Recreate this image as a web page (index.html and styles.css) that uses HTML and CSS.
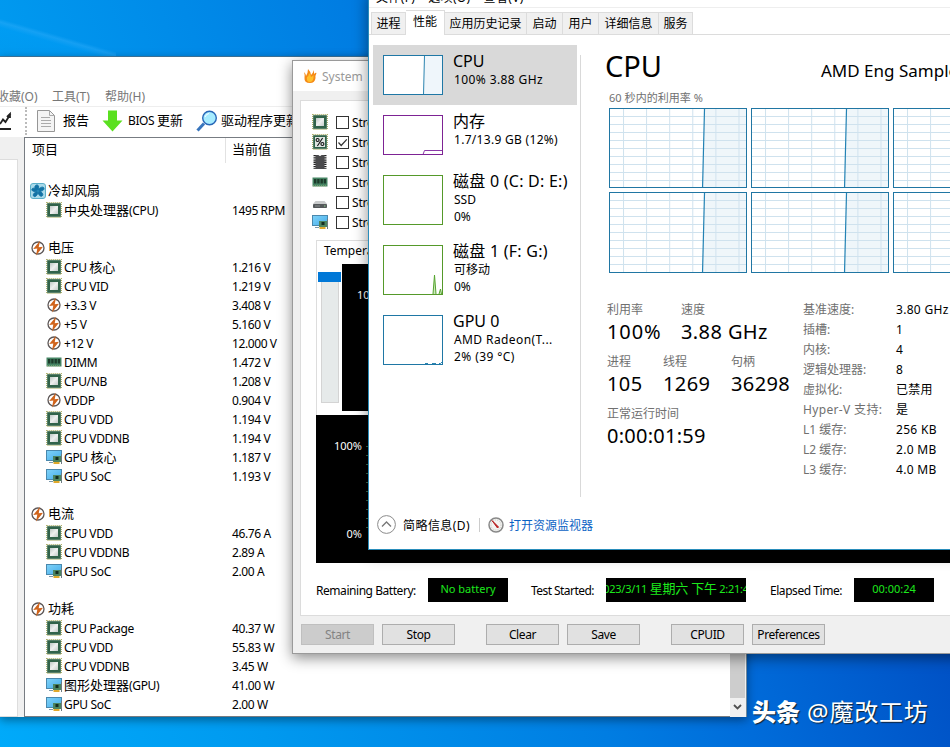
FILE: index.html
```html
<!DOCTYPE html>
<html lang="zh-CN">
<head>
  <meta charset="UTF-8" />
  <title>System Stability Test</title>
  <link rel="stylesheet" href="styles.css">
</head>
<body>
  <!-- 图标 -->
  <svg class="defs" width="0" height="0">
    <defs>
      <linearGradient id="screen" x1="0" y1="0" x2="1" y2="1"><stop offset="0" stop-color="#7fd2f8" /><stop offset="1" stop-color="#46adea" /></linearGradient>
      <linearGradient id="die" x1="0" y1="0" x2="1" y2="1"><stop offset="0" stop-color="#bfc8c5" /><stop offset=".5" stop-color="#eef0ef" /><stop offset="1" stop-color="#c5cbc9" /></linearGradient>
      <pattern id="grid" x="13" y="7" width="23.1" height="8" patternUnits="userSpaceOnUse">
        <path d="M.5 0V8M0 .5H23.1" stroke="#cfe2ee" fill="none" />
      </pattern>
    </defs>
    <symbol id="cpu" viewBox="0 0 16 16">
      <rect x=".7" y=".7" width="14.6" height="14.6" fill="none" stroke="#a5a85c" stroke-width="1.2" stroke-dasharray="1 1" />
      <rect x="1.2" y="1.2" width="13.6" height="13.6" fill="#31634a" />
      <rect x="4" y="4" width="8" height="8" fill="url(#die)" />
    </symbol>
    <symbol id="fpu" viewBox="0 0 16 16">
      <rect x=".7" y=".7" width="14.6" height="14.6" fill="none" stroke="#a5a85c" stroke-width="1.2" stroke-dasharray="1 1" />
      <rect x="1.2" y="1.2" width="13.6" height="13.6" fill="#31634a" />
      <rect x="3" y="3" width="10" height="10" fill="#dfe5e2" />
      <path d="M10.6 4L5.4 12" stroke="#111" stroke-width="1.1" />
      <circle cx="5.6" cy="6" r="1.5" fill="none" stroke="#111" stroke-width="1.1" />
      <circle cx="10.4" cy="10" r="1.5" fill="none" stroke="#111" stroke-width="1.1" />
    </symbol>
    <symbol id="cache" viewBox="0 0 16 16">
      <path d="M3 1V15M13 1V15" stroke="#222" stroke-width="3" stroke-dasharray="1.3 .9" />
      <path d="M3.5 1H6.5Q8 3 9.5 1H12.5V15H3.5Z" fill="#4b4b4d" />
    </symbol>
    <symbol id="ram" viewBox="0 0 16 16">
      <path d="M.5 3.5H15.5V12.5H.5Z" fill="#468564" />
      <path d="M2 5H4.4V9.500H2ZM5.200 5H7.600V9.500H5.200ZM8.500 5H10.900V9.500H8.500ZM11.700 5H14.100V9.500H11.700Z" fill="#1d3b2b" />
      <path d="M1 12H15" stroke="#a9bd87" stroke-dasharray="1 1" />
    </symbol>
    <symbol id="disk" viewBox="0 0 16 16">
      <path d="M3.500 7H12.500L15 10H1Z" fill="#c9cbcc" />
      <rect x="1" y="10" width="14" height="4" rx=".8" fill="#55595b" />
      <path d="M3 12H8" stroke="#8a8e90" /><rect x="12" y="11.500" width="1.500" height="1" fill="#8fd08f" />
    </symbol>
    <symbol id="gpu" viewBox="0 0 16 16">
      <rect x=".5" y="1.500" width="15" height="10" fill="url(#screen)" stroke="#4a88ad" />
      <path d="M3 13.500H7" stroke="#7c9aac" />
      <rect x="7" y="7" width="8" height="6" fill="#4c8460" />
      <rect x="9.500" y="8" width="3" height="3" fill="#142d20" />
      <path d="M7.500 14H13.500" stroke="#e0a92c" stroke-width="2" /><path d="M15.500 5V15" stroke="#6c7c80" />
    </symbol>
    <symbol id="bolt" viewBox="0 0 16 16">
      <circle cx="8" cy="8" r="6" fill="#fff" stroke="#5c5656" stroke-width="1.300" />
      <path d="M10 .8L3.200 9L7.300 8.600L6 15.500L13 6.800L8.700 7.300Z" fill="#d0641c" />
    </symbol>
    <symbol id="fan" viewBox="0 0 16 16">
      <rect x=".5" y=".5" width="15" height="15" rx="2.500" fill="#a9daea" stroke="#5bafc9" />
      <path d="M8 8C4 7 4 2 7 2C9 2 9 5 8 8C9 4 14 3 14 5.500C14 8 10 8.500 8 8C12 8 14 12 12 13C10 14 8 11 8 8C8 12 5 15 3.500 13C2.500 11 5 9 8 8C4 9 1 8 2 6C3 4 6 6 8 8Z" fill="#1272a5" stroke="#1272a5" />
      <circle cx="8" cy="8" r="1.500" fill="#2287b6" />
    </symbol>
    <symbol id="core">
      <rect width="138" height="81" fill="#fff" />
      <path d="M92.500 81L94.500 0H138V81Z" fill="#eff6fa" />
      <rect width="138" height="81" fill="url(#grid)" />
      <path d="M92.500 81L94.500 0" stroke="#2382b4" stroke-width="1.200" />
    </symbol>
  </svg>

  <!-- AIDA64 主窗口 -->
  <div class="window aida">
    <div class="aida-menu"><span>收藏(O)</span><span>工具(T)</span><span>帮助(H)</span></div>
    <div class="aida-toolbar">
      <svg class="chart-icon" width="12" height="22" viewBox="0 0 12 22"><path d="M0 14L3 9.500L5.500 12L10.500 4M7 7L10 4V8M0 19H11" fill="none" stroke="#222" stroke-width="1.800" /></svg>
      <span class="tool-sep"></span>
      <svg class="report-icon" width="18" height="22" viewBox="0 0 18 22"><path d="M.5 .5H12.500L17.500 5.500V21.500H.5Z" fill="#f4f4f4" stroke="#969696" /><path d="M12.500 .5V5.500H17.500M4 7.500H13M4 10.500H14M4 13.500H14M4 16.500H14" fill="none" stroke="#aaa" /></svg>
      <span class="tool-report">报告</span>
      <svg class="arrow-icon" width="21" height="22" viewBox="0 0 21 22"><path d="M6 .5H15V10.500H20.500L10.500 21.500L.5 10.500H6Z" fill="#5ae020" /></svg>
      <span class="tool-bios">BIOS <b>更新</b></span>
      <svg class="search-icon" width="22" height="22" viewBox="0 0 22 22"><path d="M1.500 20.500L8 13.500" stroke="#3875bd" stroke-width="3" /><circle cx="13.500" cy="8" r="6.800" fill="#a6ecff" stroke="#2867b8" stroke-width="1.400" /><path d="M9 7Q10 4 13 3.500" stroke="#fff" fill="none" /></svg>
      <span class="tool-driver">驱动程序更新</span>
    </div>
    <div class="aida-body">
      <div class="tree"></div>
      <div class="sensors">
        <div class="sensor-head"><span>项目</span><span>当前值</span></div>
        <ul class="sensor-list">
          <li class="group"><svg><use href="#fan" /></svg><b>冷却风扇</b></li>
          <li><svg><use href="#cpu" /></svg><span><b>中央处理器</b>(CPU)</span><em>1495 RPM</em></li>
          <li></li>
          <li class="group"><svg><use href="#bolt" /></svg><b>电压</b></li>
          <li><svg><use href="#cpu" /></svg><span>CPU <b>核心</b></span><em>1.216 V</em></li>
          <li><svg><use href="#cpu" /></svg><span>CPU VID</span><em>1.219 V</em></li>
          <li><svg><use href="#bolt" /></svg><span>+3.3 V</span><em>3.408 V</em></li>
          <li><svg><use href="#bolt" /></svg><span>+5 V</span><em>5.160 V</em></li>
          <li><svg><use href="#bolt" /></svg><span>+12 V</span><em>12.000 V</em></li>
          <li><svg><use href="#ram" /></svg><span>DIMM</span><em>1.472 V</em></li>
          <li><svg><use href="#cpu" /></svg><span>CPU/NB</span><em>1.208 V</em></li>
          <li><svg><use href="#bolt" /></svg><span>VDDP</span><em>0.904 V</em></li>
          <li><svg><use href="#cpu" /></svg><span>CPU VDD</span><em>1.194 V</em></li>
          <li><svg><use href="#cpu" /></svg><span>CPU VDDNB</span><em>1.194 V</em></li>
          <li><svg><use href="#gpu" /></svg><span>GPU <b>核心</b></span><em>1.187 V</em></li>
          <li><svg><use href="#gpu" /></svg><span>GPU SoC</span><em>1.193 V</em></li>
          <li></li>
          <li class="group"><svg><use href="#bolt" /></svg><b>电流</b></li>
          <li><svg><use href="#cpu" /></svg><span>CPU VDD</span><em>46.76 A</em></li>
          <li><svg><use href="#cpu" /></svg><span>CPU VDDNB</span><em>2.89 A</em></li>
          <li><svg><use href="#gpu" /></svg><span>GPU SoC</span><em>2.00 A</em></li>
          <li></li>
          <li class="group"><svg><use href="#bolt" /></svg><b>功耗</b></li>
          <li><svg><use href="#cpu" /></svg><span>CPU Package</span><em>40.37 W</em></li>
          <li><svg><use href="#cpu" /></svg><span>CPU VDD</span><em>55.83 W</em></li>
          <li><svg><use href="#cpu" /></svg><span>CPU VDDNB</span><em>3.45 W</em></li>
          <li><svg><use href="#gpu" /></svg><span><b>图形处理器</b>(GPU)</span><em>41.00 W</em></li>
          <li><svg><use href="#gpu" /></svg><span>GPU SoC</span><em>2.00 W</em></li>
        </ul>
      </div>
      <div class="scrollbar">
        <svg width="15" height="18" viewBox="0 0 15 18"><path d="M4 7L7.500 10.500L11 7" fill="none" stroke="#505050" stroke-width="1.800" /></svg>
      </div>
    </div>
  </div>

  <!-- 稳定性测试 -->
  <div class="window stability">
    <div class="stab-title">
      <svg width="14" height="16" viewBox="0 0 14 16"><path d="M1 4Q3 6 3 8Q5 5 5 1Q8 4 8 7Q10 5 11 2L11 6Q13 4 13.500 5Q12 8 12.500 10Q12 15 7 15Q1 15 1.500 10Q2 7 1 4Z" fill="#f58a16" /><path d="M4 9Q6 8 6 5Q8 7 8 9Q10 8 10.500 7Q11 14 7 14Q3 14 4 9Z" fill="#ffc02c" /></svg>
      <span>System</span>
    </div>
    <div class="stab-panel">
      <div class="stress-list">
        <label><svg><use href="#cpu" /></svg><i class="check"></i>Stress CPU</label>
        <label><svg><use href="#fpu" /></svg><i class="check"><svg viewBox="0 0 11 11"><path d="M1.500 5.500L4.200 8.500L9.800 2.300" fill="none" stroke="#333" stroke-width="1.200" /></svg></i>Stress FPU</label>
        <label><svg><use href="#cache" /></svg><i class="check"></i>Stress cache</label>
        <label><svg><use href="#ram" /></svg><i class="check"></i>Stress RAM</label>
        <label><svg><use href="#disk" /></svg><i class="check"></i>Stress disks</label>
        <label><svg><use href="#gpu" /></svg><i class="check"></i>Stress GPU</label>
      </div>
      <div class="temp-box">
        <div class="temp-tab">Temperatures</div>
        <div class="temp-main">
          <div class="slider"><div class="thumb"></div><div class="track"></div></div>
          <div class="temp-graph">100°C</div>
        </div>
      </div>
      <div class="usage-graph">
        <span>100%</span><span>0%</span>
        <div class="ticks"></div>
      </div>
      <div class="status">
        <span class="st-battery">Remaining Battery:</span><span class="lcd lcd-battery">No battery</span>
        <span class="st-started">Test Started:</span><span class="lcd lcd-started"><span>2023/3/11 <b>星期六 下午</b> 2:21:48</span></span>
        <span class="st-elapsed">Elapsed Time:</span><span class="lcd lcd-elapsed">00:00:24</span>
      </div>
    </div>
    <div class="stab-buttons">
      <button disabled>Start</button><button>Stop</button>
      <button class="apart">Clear</button><button>Save</button>
      <button class="apart">CPUID</button><button>Preferences</button>
    </div>
  </div>

  <!-- 任务管理器 -->
  <div class="window taskmgr">
    <div class="tm-menu"><span>文件(F)</span><span>选项(O)</span><span>查看(V)</span></div>
    <div class="tabs">
      <span class="tab t1">进程</span><span class="tab t2 active">性能</span><span class="tab t3">应用历史记录</span><span class="tab t4">启动</span><span class="tab t5">用户</span><span class="tab t6">详细信息</span><span class="tab t7">服务</span>
    </div>
    <div class="tm-main">
      <div class="tm-side">
        <div class="item selected">
          <svg class="mini" width="60" height="40"><path d="M40.500 40L41.500 0H60V40Z" fill="#eff6fb" /><path d="M40.500 40L41.500 0" stroke="#2b84b0" /><rect x=".5" y=".5" width="59" height="39" fill="none" stroke="#1f77a5" /></svg>
          <div class="info"><h3>CPU</h3><p class="s-cpu">100% 3.88 GHz</p></div>
        </div>
        <div class="item">
          <svg class="mini" width="60" height="40"><path d="M40 39.500L41.500 35.500H60" fill="none" stroke="#8b3aa8" /><rect x=".5" y=".5" width="59" height="39" fill="none" stroke="#7d2394" /></svg>
          <div class="info"><h3>内存</h3><p class="s-mem">1.7/13.9 GB (12%)</p></div>
        </div>
        <div class="item tall">
          <svg class="mini" width="60" height="50"><rect x=".5" y=".5" width="59" height="49" fill="none" stroke="#55992a" /></svg>
          <div class="info"><h3 class="s-disk">磁盘 0 (C: D: E:)</h3><p>SSD</p><p>0%</p></div>
        </div>
        <div class="item tall">
          <svg class="mini" width="60" height="50"><path d="M50 49L51.500 30L53 49M56 49L57.500 44L58.500 49" fill="#cde7bd" stroke="#55a52e" /><rect x=".5" y=".5" width="59" height="49" fill="none" stroke="#55992a" /></svg>
          <div class="info"><h3 class="s-disk">磁盘 1 (F: G:)</h3><p>可移动</p><p>0%</p></div>
        </div>
        <div class="item tall">
          <svg class="mini" width="60" height="50"><path d="M42 48.500H45M49 48.500H53M56 48.500H57.500L59 47" fill="none" stroke="#2b84b0" /><rect x=".5" y=".5" width="59" height="49" fill="none" stroke="#1f77a5" /></svg>
          <div class="info"><h3>GPU 0</h3><p class="s-gpu">AMD Radeon(T...</p><p class="s-tmp">2% (39 °C)</p></div>
        </div>
      </div>
      <div class="tm-detail">
        <div class="detail-head"><h1>CPU</h1><span>AMD Eng Sample</span></div>
        <div class="chart-label">60 秒内的利用率 %</div>
        <div class="charts">
          <svg class="core"><use href="#core" /></svg>
          <svg class="core"><use href="#core" /></svg>
          <svg class="core"><use href="#core" /></svg>
          <svg class="core"><use href="#core" /></svg>
          <svg class="core"><use href="#core" /></svg>
          <svg class="core"><use href="#core" /></svg>
        </div>
        <div class="stats">
          <div class="stats-left">
            <div class="stat-row">
              <div class="stat w74"><label>利用率</label><strong>100%</strong></div>
              <div class="stat"><label>速度</label><strong>3.88 GHz</strong></div>
            </div>
            <div class="stat-row">
              <div class="stat w56"><label>进程</label><strong>105</strong></div>
              <div class="stat w68"><label>线程</label><strong>1269</strong></div>
              <div class="stat"><label>句柄</label><strong>36298</strong></div>
            </div>
            <div class="stat-row">
              <div class="stat"><label>正常运行时间</label><strong class="uptime">0:00:01:59</strong></div>
            </div>
          </div>
          <dl class="stats-right">
            <dt>基准速度:</dt><dd>3.80 GHz</dd>
            <dt>插槽:</dt><dd>1</dd>
            <dt>内核:</dt><dd>4</dd>
            <dt>逻辑处理器:</dt><dd>8</dd>
            <dt>虚拟化:</dt><dd>已禁用</dd>
            <dt class="hyper">Hyper-V 支持:</dt><dd>是</dd>
            <dt>L1 缓存:</dt><dd>256 KB</dd>
            <dt>L2 缓存:</dt><dd>2.0 MB</dd>
            <dt>L3 缓存:</dt><dd>4.0 MB</dd>
          </dl>
        </div>
      </div>
    </div>
    <div class="tm-footer">
      <svg width="19" height="19" viewBox="0 0 19 19"><circle cx="9.500" cy="9.500" r="8.900" fill="#fff" stroke="#8b8b8b" /><path d="M5 11.500L9.500 7L14 11.500" fill="none" stroke="#777" stroke-width="1.300" /></svg>
      <span class="brief">简略信息(D)</span>
      <span class="foot-sep"></span>
      <svg width="16" height="16" viewBox="0 0 16 16"><circle cx="8" cy="8" r="7" fill="#f4f4f2" stroke="#888" stroke-width="1.500" /><circle cx="8" cy="8" r="5" fill="none" stroke="#c7c7c2" stroke-dasharray="1 1" /><path d="M4 3.500L10.500 10L9.500 11Z" fill="#cb2222" stroke="#b51f1f" /></svg>
      <a>打开资源监视器</a>
    </div>
  </div>

  <div class="watermark"><strong>头条</strong> @魔改工坊</div>
</body>
</html>
```
FILE: styles.css
```css
* {
  box-sizing: border-box;
}

html {
  overflow: hidden;
}

body {
  margin: 0;
  width: 950px;
  height: 747px;
  overflow: hidden;
  position: relative;
  font-family: "Noto Sans", "Noto Sans CJK SC", sans-serif;
  font-size: 12px;
  color: #000;
  background:
    linear-gradient(196deg, transparent 58%, rgba(60, 180, 255, 0.35) 62%, rgba(0, 165, 255, 0.25) 68%, transparent 100%) 0 0 / 116px 56px no-repeat,
    linear-gradient(70deg, #00aafa 0%, #0099ef 22%, #007de2 50%, #006cda 62%, #0052c6 80%, #004abc 100%);
}

h1, h3, p, ul, dl, dd {
  margin: 0;
  padding: 0;
  font-weight: normal;
}

b, em, i {
  font-weight: normal;
  font-style: normal;
}

.defs {
  position: absolute;
}

.window {
  position: absolute;
  white-space: nowrap;
}

/* AIDA64 */
.aida {
  left: 0;
  top: 56px;
  width: 747px;
  height: 661px;
  background: #fff;
  border-top: 1px solid #3c6f92;
  border-right: 1px solid #70889a;
  box-shadow: 0 3px 9px rgba(0, 0, 0, 0.4);
}

.aida-menu {
  height: 49px;
  padding-top: 31px;
  display: flex;
  line-height: 18px;
  color: #777;
}

.aida-menu span:first-child {
  width: 55px;
  margin-left: -3px;
}

.aida-menu span:nth-child(2) {
  width: 53px;
}

.aida-toolbar {
  height: 31px;
  padding-bottom: 2px;
  display: flex;
  align-items: center;
  border-top: 1px solid #eee;
  font-size: 13px;
  line-height: 18px;
}

.aida-toolbar span {
  margin-top: -2px;
}

.aida-toolbar .tool-sep {
  width: 1px;
  height: 28px;
  margin: 0 10px 0 13px;
  border-left: 2px dotted #bbb;
}

.aida-toolbar .tool-report {
  width: 31px;
  margin: -2px 8px 0 8px;
}

.aida-toolbar .tool-bios {
  width: 60px;
  margin: -2px 8px 0 5px;
  font-size: 12px;
  letter-spacing: -0.4px;
}

.tool-bios b {
  font-size: 13px;
  letter-spacing: 0;
}

.tool-driver {
  margin-left: 3px;
}

.aida-body {
  height: 580px;
  display: flex;
  background: #f0f0f0;
}

.tree {
  width: 18px;
  height: 558px;
  margin: 22px 6px 0 0;
  background: #fff;
  border: 1px solid #ddd;
  border-left: none;
}

.sensors {
  width: 706px;
  background: #fff;
  border: 1px solid #777c82;
  border-right: none;
}

.sensor-head {
  height: 43px;
  display: flex;
  font-size: 13px;
  line-height: 23px;
}

.sensor-head span:first-child {
  width: 201px;
  height: 25px;
  padding-left: 7px;
  border-right: 1px solid #e2e2e2;
}

.sensor-head span:last-child {
  padding-left: 6px;
}

.sensor-list {
  list-style: none;
}

.sensor-list li {
  height: 19px;
  padding-left: 21px;
  display: flex;
  align-items: center;
  line-height: 21px;
  letter-spacing: -0.35px;
}

.sensor-list li.group {
  padding-left: 5px;
}

.sensor-list svg {
  width: 16px;
  height: 16px;
  margin-right: 2px;
  flex: none;
}

.sensor-list b {
  font-size: 13px;
  letter-spacing: 0;
}

.sensor-list span,
.sensor-list em {
  padding-top: 2px;
}

.sensor-list span {
  width: 168px;
}

.sensor-list em {
  letter-spacing: -0.4px;
}

.scrollbar {
  width: 15px;
  height: 579px;
  background: #cdcdcd;
  display: flex;
  align-items: flex-end;
}

.scrollbar svg {
  background: #f0f0f0;
}

/* 稳定性测试 */
.stability {
  left: 292px;
  top: 60px;
  width: 680px;
  height: 594px;
  background: #f0f0f0;
  border: 1px solid #9a9a9a;
  box-shadow: 0 4px 13px rgba(0, 0, 0, 0.45);
}

.stab-title {
  height: 30px;
  padding-left: 10px;
  display: flex;
  align-items: center;
  gap: 5px;
  background: #fff;
  color: #999;
}

.stab-panel {
  height: 516px;
  margin: 9px 0 0 7px;
  padding: 11px 0 0 15px;
  background: #fff;
  border: 1px solid #dcdcdc;
}

.stress-list {
  width: 300px;
  height: 128px;
  margin-left: -4px;
}

.stress-list label {
  height: 20px;
  display: flex;
  align-items: center;
  letter-spacing: -0.2px;
}

.stress-list label > svg {
  width: 16px;
  height: 16px;
}

.check {
  width: 13px;
  height: 13px;
  margin: 1px 3px 0 8px;
  border: 1px solid #333;
  display: flex;
}

.temp-box {
  height: 175px;
  border: 1px solid #ddd;
  border-bottom: none;
}

.temp-tab {
  height: 23px;
  padding-left: 7px;
  line-height: 20px;
}

.temp-main {
  display: flex;
}

.slider {
  width: 25px;
  padding: 8px 2px 0 1px;
}

.thumb {
  width: 23px;
  height: 10px;
  background: #0078d7;
}

.track {
  width: 18px;
  height: 121px;
  margin-left: 3px;
  background: #e6eaea;
  border: 1px solid #d4d4d4;
  border-top: none;
}

.temp-graph {
  width: 620px;
  height: 147px;
  padding: 23px 0 0 15px;
  background: #000;
  color: #fff;
  font-size: 11px;
}

.usage-graph {
  height: 148px;
  width: 645px;
  padding: 23px 0 21px;
  position: relative;
  display: flex;
  flex-direction: column;
  justify-content: space-between;
  background: #000;
  color: #fff;
  font-size: 11px;
  line-height: 16px;
}

.usage-graph span {
  width: 46px;
  text-align: right;
}

.ticks {
  position: absolute;
  left: 50px;
  top: 31px;
  width: 2px;
  height: 90px;
  background: repeating-linear-gradient(#3c6a4c 0, #3c6a4c 1px, transparent 1px, transparent 9px);
}

.status {
  height: 52px;
  padding-top: 2px;
  display: flex;
  align-items: center;
}

.st-battery {
  width: 112px;
  letter-spacing: -0.45px;
}

.st-started {
  width: 75px;
  margin-left: 23px;
  letter-spacing: -0.55px;
}

.st-elapsed {
  width: 84px;
  margin-left: 24px;
  letter-spacing: -0.45px;
}

.lcd {
  height: 24px;
  display: flex;
  justify-content: center;
  overflow: hidden;
  background: #000;
  color: #1ce81c;
  font-size: 11px;
  line-height: 22px;
}

.lcd b {
  font-size: 13px;
}

.lcd-battery,
.lcd-elapsed {
  width: 80px;
}

.lcd-started {
  width: 140px;
  line-height: 20px;
  letter-spacing: -0.25px;
}

.stab-buttons {
  padding: 8px 0 0 8px;
  display: flex;
  gap: 8px;
}

.stab-buttons button {
  width: 73px;
  height: 21px;
  padding: 0;
  font: inherit;
  letter-spacing: -0.4px;
  line-height: 18px;
  background: #e1e1e1;
  border: 1px solid #adadad;
}

.stab-buttons button:disabled {
  background: #ccc;
  border-color: #bfbfbf;
  color: #838383;
}

.stab-buttons .apart {
  margin-left: 23px;
}

/* 任务管理器 */
.taskmgr {
  left: 368px;
  top: -10px;
  width: 620px;
  height: 560px;
  background: #fff;
  border: 1px solid #2a8dbb;
  box-shadow: 0 4px 14px rgba(0, 0, 0, 0.45);
}

.tm-menu {
  height: 17px;
  padding-left: 7px;
  display: flex;
  gap: 13px;
  line-height: 14px;
  letter-spacing: 0.35px;
  border-bottom: 1px solid #eee;
}

.tabs {
  height: 27px;
  padding-left: 2px;
  display: flex;
  align-items: flex-end;
  border-bottom: 1px solid #dcdcdc;
}

.tab {
  height: 22px;
  border: 1px solid #dcdcdc;
  border-left: none;
  border-bottom: none;
  background: #f0f0f0;
  text-align: center;
  line-height: 21px;
}

.tab.active {
  height: 25px;
  margin-bottom: -1px;
  background: #fff;
}

.t1 { width: 35px; border-left: 1px solid #dcdcdc; }
.t2 { width: 39px; }
.t3 { width: 82px; }
.t4 { width: 36px; }
.t5 { width: 36px; }
.t6 { width: 60px; }
.t7 { width: 34px; }

.tm-main {
  height: 463px;
  display: flex;
}

.tm-side {
  flex: none;
  width: 212px;
  height: 442px;
  margin-top: 20px;
  padding-left: 4px;
  border-right: 1px solid #d9d9d9;
}

.item {
  width: 204px;
  height: 60px;
  padding: 10px 0 0 10px;
  display: flex;
}

.item.tall {
  height: 70px;
}

.item:first-child {
  margin-top: -10px;
}

.item.selected {
  background: #d9d9d9;
}

.mini {
  background: #fff;
  flex: none;
}

.info {
  padding-left: 10px;
}

.info h3 {
  height: 16px;
  font-size: 16px;
  line-height: 13px;
}

.info h3.s-disk {
  letter-spacing: 0.25px;
}

.info p {
  padding-left: 1px;
  line-height: 17px;
}

.info .s-cpu,
.info .s-gpu,
.info .s-tmp {
  letter-spacing: 0.4px;
}

.info .s-mem {
  letter-spacing: 0.3px;
}

.tm-detail {
  padding-left: 24px;
}

.detail-head {
  height: 54px;
  padding-top: 6px;
  display: flex;
}

.detail-head h1 {
  width: 216px;
  font-size: 29px;
  line-height: 50px;
}

.detail-head span {
  font-size: 17px;
  line-height: 60px;
}

.chart-label {
  height: 19px;
  padding-left: 4px;
  line-height: 18px;
  font-size: 11px;
  letter-spacing: 0.05px;
  color: #707070;
}

.charts {
  padding-left: 4px;
  display: grid;
  grid-template-columns: 138px 138px 138px;
  grid-template-rows: 80px 81px;
  gap: 4px;
}

.core {
  width: 138px;
  height: 100%;
  border: 1px solid #2076a3;
}

.stats {
  padding: 27px 0 0 2px;
  display: flex;
}

.stats-left {
  width: 196px;
}

.stat-row {
  height: 52px;
  display: flex;
}

.stat label,
.stat strong {
  display: block;
  font-weight: normal;
}

.stat label {
  height: 19px;
  line-height: 19px;
  color: #707070;
}

.stat strong {
  font-size: 20px;
  line-height: 26px;
  letter-spacing: 0.4px;
}

.w74 { width: 74px; }
.w56 { width: 56px; }
.w68 { width: 68px; }

.stat strong.uptime {
  letter-spacing: 0.25px;
}

.w74 strong {
  letter-spacing: 0.9px;
}

.stats-right {
  display: grid;
  grid-template-columns: 93px 80px;
  grid-auto-rows: 20px;
  line-height: 20px;
}

.stats-right dt {
  color: #707070;
}

.stats-right dt.hyper {
  letter-spacing: 0.35px;
}

.stats-right dd {
  letter-spacing: 0.3px;
}

.tm-footer {
  height: 50px;
  padding: 3px 0 0 8px;
  display: flex;
  align-items: center;
}

.brief {
  width: 83px;
  padding-left: 7px;
  letter-spacing: 0.45px;
}

.foot-sep {
  width: 1px;
  height: 14px;
  margin-right: 8px;
  background: #ccc;
}

.tm-footer a {
  margin-left: 5px;
  color: #0b62c4;
}

.watermark {
  position: absolute;
  left: 752px;
  top: 694px;
  font-size: 24px;
  line-height: 36px;
  letter-spacing: 0.8px;
  color: #fff;
  text-shadow: 1px 1px 1px #123;
  white-space: nowrap;
}

.watermark strong {
  font-weight: 900;
  letter-spacing: 0;
}
```
